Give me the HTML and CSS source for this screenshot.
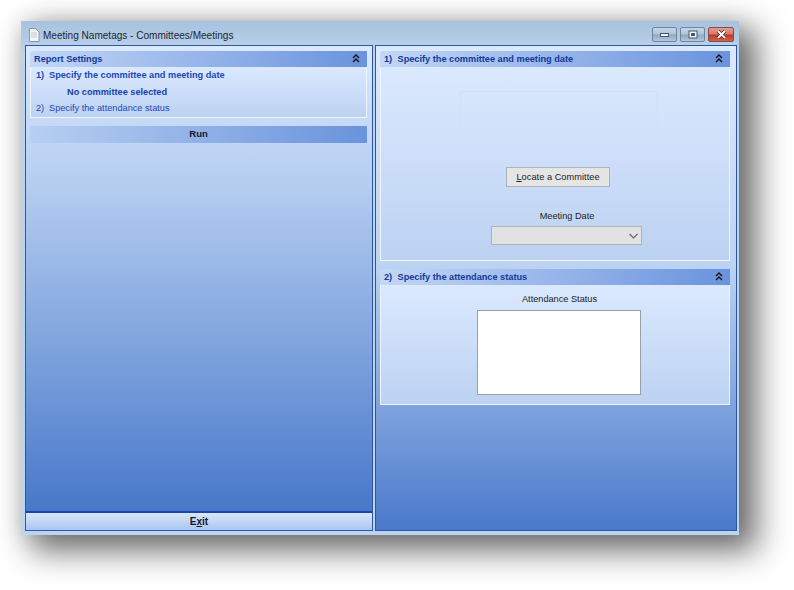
FILE: index.html
```html
<!DOCTYPE html>
<html lang="en">
<head>
<meta charset="utf-8">
<title>Meeting Nametags</title>
<link rel="stylesheet" href="styles.css">
</head>
<body>
<div class="window">
  <div class="titlebar">
    <svg class="doc-icon" width="12" height="14" viewBox="0 0 12 14"><path d="M1.5 .5h6l3.500 3.500v9.500h-9.500z" fill="#f4f6f9" stroke="#8a96a6"/><path d="M3 5h6M3 7h6M3 9h6" stroke="#c3cad4"/></svg>
    <span class="title">Meeting Nametags - Committees/Meetings</span>
    <div class="controls">
      <div class="ctl"><svg width="10" height="6" viewBox="0 0 10 6"><rect x=".5" y="1.500" width="8" height="3" fill="#f0f3f7" stroke="#46586e"/></svg></div>
      <div class="ctl"><svg width="10" height="9" viewBox="0 0 10 9"><rect x="1" y="1" width="8" height="7" fill="#f0f3f7" stroke="#46586e"/><rect x="3" y="3" width="4" height="3" fill="#46586e"/></svg></div>
      <div class="ctl close"><svg width="11" height="9" viewBox="0 0 11 9"><path d="M2 1l7 7M9 1l-7 7" stroke="#4a1f1a" stroke-width="3.400"/><path d="M2 1l7 7M9 1l-7 7" stroke="#fff" stroke-width="2"/></svg></div>
    </div>
  </div>
  <div class="client">
    <div class="pane left">
      <div class="left-main">
        <div class="group">
          <div class="group-head"><span>Report Settings</span><svg class="chev" width="8" height="9" viewBox="0 0 8 9"><path d="M1 4l3-3 3 3M1 8l3-3 3 3" fill="none" stroke="#111" stroke-width="1.400"/></svg></div>
          <div class="group-body nav">
            <div class="step bold"><span class="num">1)</span>Specify the committee and meeting date</div>
            <div class="sub">No committee selected</div>
            <div class="step"><span class="num">2)</span>Specify the attendance status</div>
          </div>
        </div>
        <div class="run">Run</div>
      </div>
      <div class="exit">E<u>x</u>it</div>
    </div>
    <div class="pane right">
      <div class="group first">
        <div class="group-head"><span><span class="num">1)</span>Specify the committee and meeting date</span><svg class="chev" width="8" height="9" viewBox="0 0 8 9"><path d="M1 4l3-3 3 3M1 8l3-3 3 3" fill="none" stroke="#111" stroke-width="1.400"/></svg></div>
        <div class="group-body committee">
          <div class="placeholder"></div>
          <div class="btn"><u>L</u>ocate a Committee</div>
          <div class="label date-label">Meeting Date</div>
          <div class="combo"><svg width="9" height="6" viewBox="0 0 9 6"><path d="M.5 1l4 4 4-4" fill="none" stroke="#666" stroke-width="1.200"/></svg></div>
        </div>
      </div>
      <div class="group second">
        <div class="group-head"><span><span class="num">2)</span>Specify the attendance status</span><svg class="chev" width="8" height="9" viewBox="0 0 8 9"><path d="M1 4l3-3 3 3M1 8l3-3 3 3" fill="none" stroke="#111" stroke-width="1.400"/></svg></div>
        <div class="group-body attendance">
          <div class="label">Attendance Status</div>
          <div class="listbox"></div>
        </div>
      </div>
    </div>
  </div>
</div>
</body>
</html>
```
FILE: styles.css
```css
* { box-sizing: border-box; }
html, body { margin: 0; height: 590px; overflow: hidden; background: #fff; }
body { padding: 21px 0 0 21px; font-family: "Liberation Sans", Arial, sans-serif; font-size: 9.200px; }
.window {
  width: 718px; height: 514px; display: flex; flex-direction: column;
  background: linear-gradient(#a6c2dd 0, #bcd3ea 30px, #bcd4ec 100%);
  box-shadow: 14px 12px 30px 4px rgba(0,0,0,.56), 0 0 20px rgba(0,0,0,.1);
}
.titlebar { height: 24px; flex: none; display: flex; align-items: center; padding: 0 5px 0 7px; }
.doc-icon { margin-right: 3px; margin-top: 3px; }
.title { font-size: 10.050px; color: #1c2530; margin-top: 4px; }
.controls { margin-left: auto; display: flex; gap: 3px; align-self: flex-start; padding-top: 6px; }
.ctl {
  width: 25px; height: 15px; border: 1px solid #71859c; border-radius: 2px;
  display: flex; align-items: center; justify-content: center;
  background: linear-gradient(#c6d6e6 0, #aec3d9 48%, #8ea7c0 52%, #b4c9de 100%);
}
.ctl.close { width: 26px; border-color: #8b4b45; background: linear-gradient(#e39a8d 0, #d9786a 48%, #bb3a26 52%, #d2604c 100%); }
.client { flex: 1; display: flex; gap: 2px; padding: 0 2px 4px 4px; min-height: 0; }
.pane { border: 1px solid #2e55ac; display: flex; flex-direction: column; }
.left { width: 348px; }
.right { flex: 1; padding: 5px 6px 0 4px; background: linear-gradient(#dbeafe 0, #bcd3f2 45%, #4a79cb 100%); }
.left-main { flex: 1; padding: 5px 5px 0 4px; background: linear-gradient(#dbeafe 0, #b4cdf0 30%, #4878c9 100%); }
.group-head {
  height: 16px; display: flex; align-items: center; justify-content: space-between;
  padding: 0 7px 1px 4px; font-weight: bold; color: #123a9c;
  background: linear-gradient(90deg, #c3d7f6 0, #6a93dd 100%);
  border-radius: 3px 0 0 0;
}
.group-body { border: 1px solid #eef5fe; border-top-width: 0; background: linear-gradient(#dbe9fe, #bcd2f2); }
.nav { height: 51px; color: #1d48b8; padding: 0 0 0 5px; }
.step { height: 17px; line-height: 16px; }
.step.bold { font-weight: bold; }
.sub { height: 16px; line-height: 16px; padding-left: 31px; font-weight: bold; color: #1a40b0; }
.num { display: inline-block; width: 13.500px; }
.nav .step .num { width: 13px; }
.run {
  margin-top: 8px; height: 17px; line-height: 16px; text-align: center; font-weight: bold; color: #10182c; font-size: 9.500px;
  background: linear-gradient(90deg, #b7cff1 0, #6a93dd 100%);
}
.exit {
  height: 19px; flex: none; line-height: 17px; text-align: center; font-weight: bold; font-size: 10px; color: #10182c;
  border-top: 2px solid #1a44a6;
  background: linear-gradient(#d9e7fb, #a9c5f0);
}
.committee { height: 194px; display: flex; flex-direction: column; align-items: flex-start; }
.placeholder { width: 198px; height: 69px; margin: 24px 0 0 79px; border: 1px solid #cfe0f7; border-bottom-color: transparent; border-radius: 3px; }
.btn {
  width: 104px; height: 20px; margin: 7px 0 0 125px; line-height: 18px; text-align: center; color: #222;
  background: #e5e5e5; border: 1px solid #adb3bb; letter-spacing: .050px;
}
.label { color: #222; text-align: center; }
.date-label { width: 152px; margin: 22px 0 0 110px; height: 14px; line-height: 14px; }
.combo {
  width: 151px; height: 19px; margin: 3px 0 0 110px; background: #e2e2e2; border: 1px solid #adb3bb;
  display: flex; align-items: center; justify-content: flex-end; padding-right: 3px;
}
.second { margin-top: 8px; }
.attendance { height: 120px; display: flex; flex-direction: column; align-items: flex-start; padding-top: 8px; }
.attendance .label { width: 165px; margin-left: 96px; height: 12px; line-height: 12px; }
.listbox { width: 164px; height: 85px; margin: 5px 0 0 96px; background: #fff; border: 1px solid #98a0aa; }
```
